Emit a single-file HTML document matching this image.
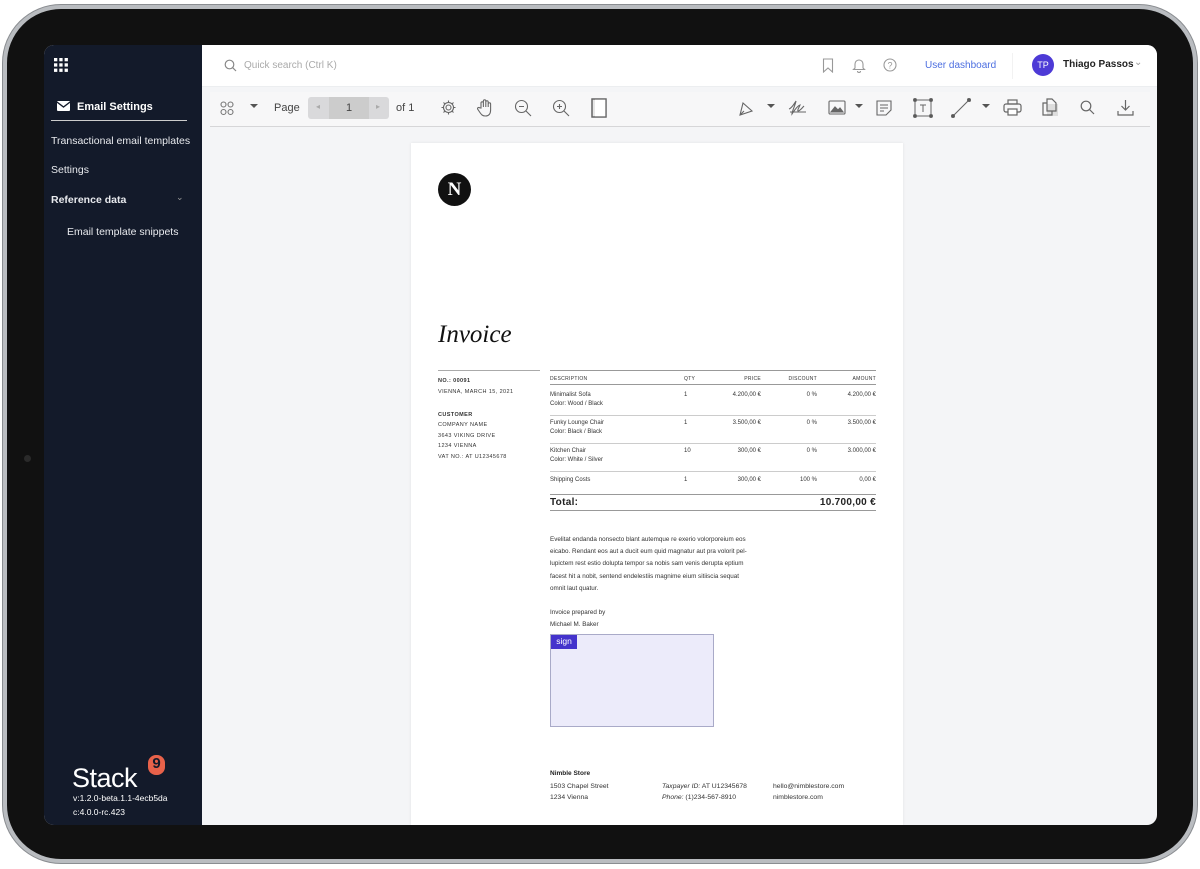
<!DOCTYPE html>
<html><head><meta charset="utf-8"><style>
*{box-sizing:border-box;margin:0;padding:0}
body{width:1200px;height:869px;background:#fff;position:relative;overflow:hidden;font-family:"Liberation Sans",sans-serif}
.dev{position:absolute;left:3px;top:5px;width:1194px;height:858px;border-radius:58px;background:#111;border:4px solid #b9bcc0;box-shadow:0 0 0 1px #8a8d91}
.scr{position:absolute;left:44px;top:45px;width:1113px;height:780px;border-radius:10px;overflow:hidden;background:#f4f5f7}
.side{position:absolute;left:0;top:0;width:158px;height:780px;background:#131a2a;color:#e8eaee;font-size:10.5px}
.top{position:absolute;left:158px;top:0;right:0;height:42px;background:#fff;border-bottom:1px solid #eceef0}
.tb{position:absolute;left:166px;top:47px;width:940px;height:35px;background:#f7f7f8;border-bottom:1px solid #d6d6d8}
.paper{position:absolute;left:367px;top:98px;width:492px;height:682px;background:#fff;box-shadow:0 0 3px rgba(0,0,0,.08)}
.ab{position:absolute}
.sm{font-size:5.5px;color:#333;letter-spacing:.4px}
.row{position:absolute;left:139px;width:326px;font-size:6px;color:#333;border-top:1px solid #ccc}
svg{position:absolute}
</style></head><body>
<div class="dev"></div>
<div class="scr">
 <div class="side">
  <svg style="left:10px;top:13px" width="14" height="14" viewBox="0 0 14 14" fill="#fff"><rect x="0" y="0" width="3.3" height="3.3"/><rect x="5.3" y="0" width="3.3" height="3.3"/><rect x="10.6" y="0" width="3.3" height="3.3"/><rect x="0" y="5.3" width="3.3" height="3.3"/><rect x="5.3" y="5.3" width="3.3" height="3.3"/><rect x="10.6" y="5.3" width="3.3" height="3.3"/><rect x="0" y="10.6" width="3.3" height="3.3"/><rect x="5.3" y="10.6" width="3.3" height="3.3"/><rect x="10.6" y="10.6" width="3.3" height="3.3"/></svg>
  <svg style="left:13px;top:56px" width="13" height="10" viewBox="0 0 13 10"><rect width="13" height="10" rx="1" fill="#fff"/><path d="M0 1 L6.5 6 L13 1" stroke="#131a2a" stroke-width="1.3" fill="none"/></svg>
  <div class="ab" style="left:33px;top:56px;font-weight:bold;font-size:11px;color:#fff">Email Settings</div>
  <div class="ab" style="left:7px;top:75px;width:136px;height:1px;background:#ccc"></div>
  <div class="ab" style="left:7px;top:90px">Transactional email templates</div>
  <div class="ab" style="left:7px;top:119px">Settings</div>
  <div class="ab" style="left:7px;top:149px;font-weight:bold">Reference data</div>
  <div class="ab" style="left:132px;top:147px;font-size:9px;color:#999">⌄</div>
  <div class="ab" style="left:23px;top:181px">Email template snippets</div>
  <div class="ab" style="left:28px;top:718px;font-size:27px;color:#fff;letter-spacing:-.5px">Stack</div>
  <div class="ab" style="left:104px;top:710px;width:17px;height:20px;border-radius:8px;background:#e8624a;color:#131a2a;font-size:15px;font-weight:bold;text-align:center;line-height:18px">9</div>
  <div class="ab" style="left:29px;top:748px;font-size:8.5px;color:#fff">v:1.2.0-beta.1.1-4ecb5da</div>
  <div class="ab" style="left:29px;top:762px;font-size:8.5px;color:#fff">c:4.0.0-rc.423</div>
 </div>
 <div class="top">
  <svg style="left:22px;top:14px" width="13" height="13" viewBox="0 0 13 13" fill="none" stroke="#888" stroke-width="1.2"><circle cx="5.5" cy="5.5" r="4.3"/><path d="M8.7 8.7L12 12"/></svg>
  <div class="ab" style="left:42px;top:15px;font-size:10px;color:#aaa">Quick search (Ctrl K)</div>
  <svg style="left:620px;top:13px" width="12" height="15" viewBox="0 0 12 15" fill="none" stroke="#999" stroke-width="1.1"><path d="M1.5 1h9v13l-4.5-4-4.5 4z"/></svg>
  <svg style="left:650px;top:13px" width="14" height="15" viewBox="0 0 14 15" fill="none" stroke="#999" stroke-width="1.1"><path d="M3 10V6a4 4 0 018 0v4l1.5 1.5h-11z M5.5 13a1.5 1.5 0 003 0"/></svg>
  <svg style="left:681px;top:13px" width="14" height="14" viewBox="0 0 14 14" fill="none" stroke="#999" stroke-width="1.1"><circle cx="7" cy="7" r="6"/><text x="7" y="10.3" font-size="9" text-anchor="middle" fill="#999" stroke="none" font-family="Liberation Sans">?</text></svg>
  <div class="ab" style="left:723px;top:15px;font-size:10px;color:#4c6ee0">User dashboard</div>
  <div class="ab" style="left:810px;top:8px;width:1px;height:26px;background:#f2f2f2"></div>
  <div class="ab" style="left:830px;top:9px;width:22px;height:22px;border-radius:50%;background:#4d3ad6;color:#fff;font-size:9px;text-align:center;line-height:22px">TP</div>
  <div class="ab" style="left:861px;top:14px;font-size:10px;font-weight:bold;color:#222">Thiago Passos</div>
  <div class="ab" style="left:932px;top:12px;font-size:10px;color:#999">⌄</div>
 </div>
 <div class="tb">
  <svg style="left:10px;top:9px" width="14" height="15" viewBox="0 0 14 15" fill="none" stroke="#777" stroke-width="1.1"><circle cx="3.5" cy="3.5" r="2.5"/><circle cx="10.5" cy="3.5" r="2.5"/><circle cx="3.5" cy="11" r="2.5"/><circle cx="10.5" cy="11" r="2.5"/></svg>
  <div class="ab" style="left:40px;top:12px;border:4px solid transparent;border-top:4px solid #555;width:0;height:0"></div>
  <div class="ab" style="left:64px;top:10px;font-size:11px;color:#444">Page</div>
  <div class="ab" style="left:98px;top:5px;width:81px;height:22px;background:#d9d9db;border-radius:3px"></div>
  <div class="ab" style="left:119px;top:5px;width:40px;height:22px;background:#ccc;text-align:center;font-size:11px;line-height:22px;color:#444">1</div>
  <div class="ab" style="left:106px;top:10px;font-size:8px;color:#aaa">◂</div>
  <div class="ab" style="left:166px;top:10px;font-size:8px;color:#aaa">▸</div>
  <div class="ab" style="left:186px;top:10px;font-size:11px;color:#444">of 1</div>
  <svg style="left:230px;top:7px" width="17" height="17" viewBox="0 0 17 17" fill="none" stroke="#666" stroke-width="1.1"><circle cx="8.5" cy="8.5" r="2.5"/><path d="M8.5 1.5v2M8.5 13.5v2M1.5 8.5h2M13.5 8.5h2M3.5 3.5l1.4 1.4M12.1 12.1l1.4 1.4M3.5 13.5l1.4-1.4M12.1 4.9l1.4-1.4"/><circle cx="8.5" cy="8.5" r="5"/></svg>
  <svg style="left:267px;top:6px" width="18" height="19" viewBox="0 0 18 19" fill="none" stroke="#666" stroke-width="1.1"><path d="M4 10V5a1.2 1.2 0 012.4 0v4V3a1.2 1.2 0 012.4 0v6V4a1.2 1.2 0 012.4 0v5V6a1.2 1.2 0 012.4 0v6c0 4-2 6-5 6s-4-1-6-4l-2-3a1.2 1.2 0 012-1.2z"/></svg>
  <svg style="left:304px;top:7px" width="18" height="18" viewBox="0 0 18 18" fill="none" stroke="#666" stroke-width="1.1"><circle cx="7.5" cy="7.5" r="6"/><path d="M12 12l5 5M5 7.5h5"/></svg>
  <svg style="left:342px;top:7px" width="18" height="18" viewBox="0 0 18 18" fill="none" stroke="#666" stroke-width="1.1"><circle cx="7.5" cy="7.5" r="6"/><path d="M12 12l5 5M5 7.5h5M7.5 5v5"/></svg>
  <svg style="left:381px;top:6px" width="16" height="20" viewBox="0 0 16 20" fill="none" stroke="#666" stroke-width="1.3"><rect x="1" y="1" width="14" height="18" fill="#e6e6e6"/><rect x="4" y="1" width="11" height="18" fill="#fff" stroke="none"/><rect x="1" y="1" width="14" height="18"/></svg>
  <svg style="left:528px;top:8px" width="16" height="17" viewBox="0 0 16 17" fill="none" stroke="#666" stroke-width="1.1"><path d="M2 15L5 3l9 8z M2 15l4-4"/></svg>
  <div class="ab" style="left:557px;top:12px;border:4px solid transparent;border-top:4px solid #555"></div>
  <svg style="left:578px;top:6px" width="20" height="20" viewBox="0 0 20 20" fill="none" stroke="#666" stroke-width="1.1"><path d="M1 11c3-1 5-5 7-8-1 5-4 10-4 13 2-3 5-8 8-9-1 3-3 5-2 6 2 0 4-3 6-5M2 14h16"/></svg>
  <svg style="left:618px;top:8px" width="18" height="15" viewBox="0 0 18 15" fill="none" stroke="#666" stroke-width="1.1"><rect x="1" y="1" width="16" height="13" rx="1"/><path d="M3 12l4-5 3 3 2-2 3 4z" fill="#666"/></svg>
  <div class="ab" style="left:645px;top:12px;border:4px solid transparent;border-top:4px solid #555"></div>
  <svg style="left:666px;top:8px" width="16" height="16" viewBox="0 0 16 16" fill="none" stroke="#666" stroke-width="1.1"><path d="M1 1h14v9l-5 5H1z M4 5h8M4 8h8M4 11h4"/></svg>
  <svg style="left:703px;top:6px" width="20" height="20" viewBox="0 0 20 20" fill="none" stroke="#666" stroke-width="1"><rect x="2" y="2" width="16" height="16"/><circle cx="2" cy="2" r="1.5" fill="#555"/><circle cx="18" cy="2" r="1.5" fill="#555"/><circle cx="2" cy="18" r="1.5" fill="#555"/><circle cx="18" cy="18" r="1.5" fill="#555"/><path d="M7 7h6M10 7v7"/></svg>
  <svg style="left:741px;top:6px" width="20" height="20" viewBox="0 0 20 20" fill="none" stroke="#666" stroke-width="1.1"><path d="M2 18L18 2"/><circle cx="2" cy="18" r="1.5" fill="#555"/><circle cx="18" cy="2" r="1.5" fill="#555"/></svg>
  <div class="ab" style="left:772px;top:12px;border:4px solid transparent;border-top:4px solid #555"></div>
  <svg style="left:793px;top:7px" width="19" height="18" viewBox="0 0 19 18" fill="none" stroke="#666" stroke-width="1.2"><rect x="1" y="5" width="17" height="8" rx="2"/><rect x="5" y="1" width="9" height="4"/><rect x="5" y="10" width="9" height="6" fill="#fff"/></svg>
  <svg style="left:831px;top:6px" width="18" height="19" viewBox="0 0 18 19" fill="none" stroke="#666" stroke-width="1.2"><rect x="6" y="6" width="11" height="12" fill="#ddd" stroke="none"/><path d="M6 1h5l4 4v8H6z M6 5H2v12h9v-4"/></svg>
  <svg style="left:870px;top:8px" width="15" height="15" viewBox="0 0 15 15" fill="none" stroke="#666" stroke-width="1.2"><circle cx="6" cy="6" r="4.8"/><path d="M9.5 9.5L14 14"/></svg>
  <svg style="left:907px;top:7px" width="17" height="17" viewBox="0 0 17 17" fill="none" stroke="#666" stroke-width="1.2"><path d="M8.5 1v10M4.5 7l4 4 4-4M1 12v4h15v-4"/></svg>
 </div>
 <div class="paper">
  <div class="ab" style="left:27px;top:30px;width:33px;height:33px;border-radius:50%;background:#111;color:#fff;font-family:'Liberation Serif',serif;font-weight:bold;font-size:19px;text-align:center;line-height:33px">N</div>
  <div class="ab" style="left:27px;top:178px;font-family:'Liberation Serif',serif;font-style:italic;font-size:25px;color:#111">Invoice</div>
  <div class="ab" style="left:27px;top:227px;width:102px;height:1px;background:#aaa"></div>
  <div class="ab sm" style="left:27px;top:235px;font-weight:bold">NO.: 00091</div>
  <div class="ab sm" style="left:27px;top:246px">VIENNA, MARCH 15, 2021</div>
  <div class="ab sm" style="left:27px;top:269px;font-weight:bold">CUSTOMER</div>
  <div class="ab sm" style="left:27px;top:279px">COMPANY NAME</div>
  <div class="ab sm" style="left:27px;top:290px">3643 VIKING DRIVE</div>
  <div class="ab sm" style="left:27px;top:300px">1234 VIENNA</div>
  <div class="ab sm" style="left:27px;top:311px">VAT NO.: AT U12345678</div>
  <div class="row" style="top:227px;height:15px;border-top:1px solid #999;border-bottom:1.5px solid #999;font-size:5px;letter-spacing:.3px">
   <span class="ab" style="left:0;top:5px">DESCRIPTION</span><span class="ab" style="left:134px;top:5px">QTY</span><span class="ab" style="right:115px;top:5px">PRICE</span><span class="ab" style="right:59px;top:5px">DISCOUNT</span><span class="ab" style="right:0;top:5px">AMOUNT</span></div>
  <div class="row" style="top:248px;border:none;line-height:9px"><span class="ab" style="left:0">Minimalist Sofa<br>Color: Wood / Black</span><span class="ab" style="left:134px">1</span><span class="ab" style="right:115px">4.200,00 €</span><span class="ab" style="right:59px">0 %</span><span class="ab" style="right:0">4.200,00 €</span></div>
  <div class="row" style="top:272px;height:0"></div>
  <div class="row" style="top:276px;border:none;line-height:9px"><span class="ab" style="left:0">Funky Lounge Chair<br>Color: Black / Black</span><span class="ab" style="left:134px">1</span><span class="ab" style="right:115px">3.500,00 €</span><span class="ab" style="right:59px">0 %</span><span class="ab" style="right:0">3.500,00 €</span></div>
  <div class="row" style="top:300px;height:0"></div>
  <div class="row" style="top:304px;border:none;line-height:9px"><span class="ab" style="left:0">Kitchen Chair<br>Color: White / Silver</span><span class="ab" style="left:134px">10</span><span class="ab" style="right:115px">300,00 €</span><span class="ab" style="right:59px">0 %</span><span class="ab" style="right:0">3.000,00 €</span></div>
  <div class="row" style="top:328px;height:0"></div>
  <div class="row" style="top:333px;border:none;line-height:9px"><span class="ab" style="left:0">Shipping Costs</span><span class="ab" style="left:134px">1</span><span class="ab" style="right:115px">300,00 €</span><span class="ab" style="right:59px">100 %</span><span class="ab" style="right:0">0,00 €</span></div>
  <div class="row" style="top:351px;height:17px;border-top:1.5px solid #999;border-bottom:1.5px solid #999;font-size:10px;font-weight:bold;color:#222;letter-spacing:.3px"><span class="ab" style="left:0;top:2px">Total:</span><span class="ab" style="right:0;top:2px">10.700,00 €</span></div>
  <div class="ab" style="left:139px;top:391px;font-size:6.3px;line-height:12.2px;color:#333;width:200px">Evelitat endanda nonsecto blant autemque re exerio volorporeium eos eicabo. Rendant eos aut a ducit eum quid magnatur aut pra volorit pel-lupictem rest estio dolupta tempor sa nobis sam venis derupta eptium facest hit a nobit, sentend endelestiis magnime eium sitiiscia sequat omnit laut quatur.</div>
  <div class="ab" style="left:139px;top:464px;font-size:6.3px;line-height:12px;color:#333">Invoice prepared by<br>Michael M. Baker</div>
  <div class="ab" style="left:139px;top:491px;width:164px;height:93px;background:#ecebfa;border:1.5px solid #a9aac8"></div>
  <div class="ab" style="left:140px;top:492px;width:26px;height:14px;background:#4433cc;color:#fff;font-size:8.5px;text-align:center;line-height:13px">sign</div>
  <div class="ab" style="left:139px;top:627px;font-size:6.5px;font-weight:bold;color:#222">Nimble Store</div>
  <div class="ab" style="left:139px;top:638px;font-size:6.8px;line-height:11px;color:#333">1503 Chapel Street<br>1234 Vienna</div>
  <div class="ab" style="left:251px;top:638px;font-size:6.8px;line-height:11px;color:#333"><i>Taxpayer ID:</i> AT U12345678<br><i>Phone:</i> (1)234-567-8910</div>
  <div class="ab" style="left:362px;top:638px;font-size:6.8px;line-height:11px;color:#333">hello@nimblestore.com<br>nimblestore.com</div>
 </div>
</div>
<div class="ab" style="left:24px;top:455px;width:7px;height:7px;border-radius:50%;background:#2a2a2a"></div>
</body></html>
